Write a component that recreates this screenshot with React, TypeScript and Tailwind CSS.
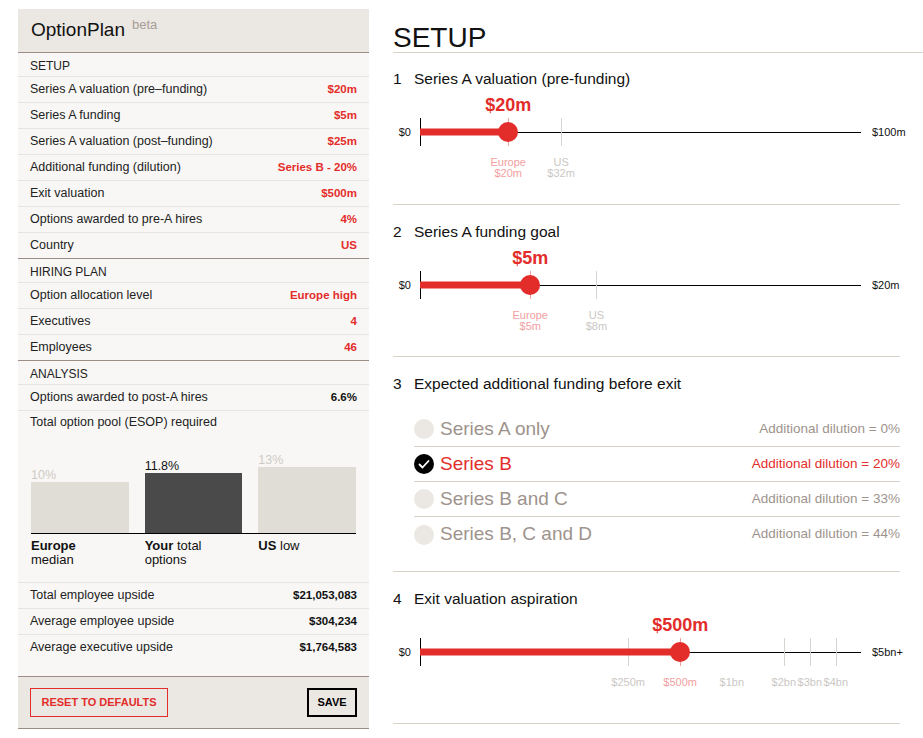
const setupRows = [
  ["Series A valuation (pre–funding)", "$20m"],
  ["Series A funding", "$5m"],
  ["Series A valuation (post–funding)", "$25m"],
  ["Additional funding (dilution)", "Series B - 20%"],
  ["Exit valuation", "$500m"],
  ["Options awarded to pre-A hires", "4%"],
  ["Country", "US"],
];

const hiringRows = [
  ["Option allocation level", "Europe high"],
  ["Executives", "4"],
  ["Employees", "46"],
];

const upsideRows = [
  ["Total employee upside", "$21,053,083"],
  ["Average employee upside", "$304,234"],
  ["Average executive upside", "$1,764,583"],
];

const bars = [
  { pct: "10%", h: 51, dark: false, bold: "Europe", rest: "", line2: "median" },
  { pct: "11.8%", h: 60, dark: true, bold: "Your", rest: " total", line2: "options" },
  { pct: "13%", h: 66, dark: false, bold: "US", rest: " low", line2: "" },
];

const options = [
  { name: "Series A only", dilution: "0%", active: false },
  { name: "Series B", dilution: "20%", active: true },
  { name: "Series B and C", dilution: "33%", active: false },
  { name: "Series B, C and D", dilution: "44%", active: false },
];

type Mark = { pct: number; lines: string[]; active?: boolean; tick?: boolean };

function Row({ label, value, red = true }: { label: string; value: string; red?: boolean }) {
  return (
    <div className="flex h-[26px] items-center justify-between border-b border-[#e7e3de] px-3 last:h-[25px] last:border-b-0">
      <span className="text-[12.5px] text-[#222]">{label}</span>
      <span className={`text-[11.5px] font-bold ${red ? "text-[#e32d2b]" : "text-[#111]"}`}>{value}</span>
    </div>
  );
}

function SectionHead({ title }: { title: string }) {
  return (
    <div className="flex h-[24px] items-center border-b border-[#e7e3de] px-3 pt-[3px] text-[12px] text-[#222]">
      {title}
    </div>
  );
}

function Slider({ value, pct, end, marks }: { value: string; pct: number; end: string; marks: Mark[] }) {
  return (
    <div className="mt-[29px] mb-[57px] flex items-center">
      <span className="w-[27px] shrink-0 pr-[9px] text-right text-[11px] text-[#111]">$0</span>
      <div className="relative h-[28px] w-[441px] shrink-0">
        <div className="absolute left-0 right-0 top-1/2 h-px bg-black" />
        {marks
          .filter((m) => m.tick !== false)
          .map((m) => (
            <div
              key={m.lines.join()}
              className={`absolute top-0 h-full w-px ${m.active ? "bg-[#f2a0a0]" : "bg-[#d8d4d0]"}`}
              style={{ left: `${m.pct}%` }}
            />
          ))}
        <div className="absolute left-0 top-0 h-full w-px bg-black" />
        <div className="absolute left-0 top-1/2 h-[7px] -translate-y-1/2 bg-[#e32d2b]" style={{ width: `${pct}%` }} />
        <div
          className="absolute top-1/2 h-5 w-5 -translate-x-1/2 -translate-y-1/2 rounded-full bg-[#e32d2b]"
          style={{ left: `${pct}%` }}
        />
        <div
          className="absolute bottom-full mb-[2px] -translate-x-1/2 whitespace-nowrap text-[18px] font-bold leading-[22px] text-[#e32d2b]"
          style={{ left: `${pct}%` }}
        >
          {value}
        </div>
        {marks.map((m) => (
          <div
            key={"l" + m.lines.join()}
            className={`absolute top-full mt-[11px] -translate-x-1/2 whitespace-nowrap text-center text-[11px] leading-[11px] ${
              m.active ? "text-[#f2a0a0]" : "text-[#cbc7c3]"
            }`}
            style={{ left: `${m.pct}%` }}
          >
            {m.lines.map((l) => (
              <div key={l}>{l}</div>
            ))}
          </div>
        ))}
      </div>
      <span className="ml-[11px] shrink-0 whitespace-nowrap text-[11px] text-[#111]">{end}</span>
    </div>
  );
}

function Heading({ n, text }: { n: number; text: string }) {
  return (
    <h2 className="flex text-[15.5px] leading-5 text-[#111]">
      <span className="w-[21px]">{n}</span>
      {text}
    </h2>
  );
}

function Check({ active }: { active: boolean }) {
  if (!active) return <span className="h-5 w-5 rounded-full bg-[#ebe7e2]" />;
  return (
    <svg width="20" height="20" viewBox="0 0 20 20">
      <circle cx="10" cy="10" r="10" fill="#000" />
      <path d="M5.5 10.5l3 3 6-6.5" fill="none" stroke="#fff" strokeWidth="1.8" strokeLinecap="round" strokeLinejoin="round" />
    </svg>
  );
}

export default function App() {
  return (
    <div className="flex min-h-[738px] w-[923px] bg-white font-['Liberation_Sans',Arial,sans-serif]">
      <aside className="ml-[18px] mt-[9px] w-[351px] shrink-0 self-start bg-[#f8f7f5]">
        <header className="flex h-[44px] items-center border-b border-[#9c8e86] bg-[#ebe7e2] px-[13px]">
          <span className="text-[19px] text-[#111]">OptionPlan</span>
          <span className="ml-[7px] -mt-[12px] text-[13px] text-[#a79e97]">beta</span>
        </header>

        <section className="border-b border-[#9c8e86]">
          <SectionHead title="SETUP" />
          {setupRows.map(([l, v]) => (
            <Row key={l} label={l} value={v} />
          ))}
        </section>

        <section className="border-b border-[#9c8e86]">
          <SectionHead title="HIRING PLAN" />
          {hiringRows.map(([l, v]) => (
            <Row key={l} label={l} value={v} />
          ))}
        </section>

        <section>
          <SectionHead title="ANALYSIS" />
          <div className="flex h-[26px] items-center justify-between border-b border-[#e7e3de] px-3">
            <span className="text-[12.5px] text-[#222]">Options awarded to post-A hires</span>
            <span className="text-[11.5px] font-bold text-[#111]">6.6%</span>
          </div>
          <div className="flex h-[22px] items-center px-3 text-[12.5px] text-[#222]">Total option pool (ESOP) required</div>

          <div className="mx-[13px] grid h-[101px] grid-cols-3 items-end gap-4 border-b border-black">
            {bars.map((b) => (
              <div key={b.pct} className="flex flex-col">
                <span className={`text-[12.5px] leading-[14px] ${b.dark ? "text-[#111]" : "text-[#cfcac5]"}`}>{b.pct}</span>
                <div className={b.dark ? "bg-[#4a4a4a]" : "bg-[#e0dcd6]"} style={{ height: b.h }} />
              </div>
            ))}
          </div>
          <div className="mx-[13px] grid h-[48px] grid-cols-3 gap-4 pt-[5px] text-[13px] leading-[14px] text-[#111]">
            {bars.map((b) => (
              <div key={b.bold}>
                <div>
                  <b>{b.bold}</b>
                  {b.rest}
                </div>
                {b.line2 && <div>{b.line2}</div>}
              </div>
            ))}
          </div>

          <div className="mb-[16px] border-t border-[#e7e3de]">
            {upsideRows.map(([l, v]) => (
              <Row key={l} label={l} value={v} red={false} />
            ))}
          </div>
        </section>

        <footer className="flex items-center justify-between border-y border-[#9c8e86] bg-[#ebe7e2] px-3 pt-[11px] pb-[11px]">
          <button className="h-[29px] w-[138px] border-[1.5px] border-[#e32d2b] text-[11px] font-bold text-[#e32d2b]">
            RESET TO DEFAULTS
          </button>
          <button className="h-[29px] w-[50px] border-2 border-black text-[11px] font-bold text-black">SAVE</button>
        </footer>
      </aside>

      <main className="ml-[24px] flex-1">
        <div className="flex h-[53px] items-end border-b border-[#d9d2ca]">
          <h1 className="text-[28px] leading-[28px] text-[#111]">SETUP</h1>
        </div>

        <div className="w-[507px]">
          <section className="border-b border-[#d9d2ca] pt-[16px] pb-px">
            <Heading n={1} text="Series A valuation (pre-funding)" />
            <Slider
              value="$20m"
              pct={20}
              end="$100m"
              marks={[
                { pct: 20, lines: ["Europe", "$20m"], active: true },
                { pct: 32, lines: ["US", "$32m"] },
              ]}
            />
          </section>

          <section className="border-b border-[#d9d2ca] pt-[17px]">
            <Heading n={2} text="Series A funding goal" />
            <Slider
              value="$5m"
              pct={25}
              end="$20m"
              marks={[
                { pct: 25, lines: ["Europe", "$5m"], active: true },
                { pct: 40, lines: ["US", "$8m"] },
              ]}
            />
          </section>

          <section className="border-b border-[#d9d2ca] pt-[17px] pb-[19px]">
            <Heading n={3} text="Expected additional funding before exit" />
            <div className="ml-[21px] mt-[18px]">
              {options.map((o) => (
                <div
                  key={o.name}
                  className="flex h-[35px] items-center justify-between border-b border-[#d9d2ca] last:border-b-0"
                >
                  <div className="flex items-center gap-[6px]">
                    <Check active={o.active} />
                    <span className={`text-[19px] ${o.active ? "text-[#e32d2b]" : "text-[#9e938c]"}`}>{o.name}</span>
                  </div>
                  <span className={`text-[13.5px] ${o.active ? "text-[#e32d2b]" : "text-[#9e938c]"}`}>
                    Additional dilution = {o.dilution}
                  </span>
                </div>
              ))}
            </div>
          </section>

          <section className="border-b border-[#d9d2ca] pt-[17px]">
            <Heading n={4} text="Exit valuation aspiration" />
            <Slider
              value="$500m"
              pct={59}
              end="$5bn+"
              marks={[
                { pct: 47.2, lines: ["$250m"] },
                { pct: 59, lines: ["$500m"], active: true },
                { pct: 70.7, lines: ["$1bn"], tick: false },
                { pct: 82.5, lines: ["$2bn"] },
                { pct: 88.4, lines: ["$3bn"] },
                { pct: 94.3, lines: ["$4bn"] },
              ]}
            />
          </section>
        </div>
      </main>
    </div>
  );
}
